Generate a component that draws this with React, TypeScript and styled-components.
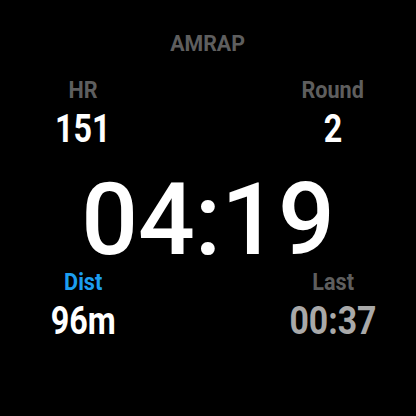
import styled, { createGlobalStyle } from 'styled-components'

const GlobalStyle = createGlobalStyle`
  html, body {
    margin: 0;
    padding: 0;
    background: #000;
  }
`

const Screen = styled.div`
  width: 416px;
  height: 416px;
  background: #000;
  display: flex;
  flex-direction: column;
  align-items: center;
  padding-top: 33px;
  box-sizing: border-box;
  font-family: Roboto, 'Liberation Sans', sans-serif;
  font-weight: 700;
`

const Title = styled.div`
  font-size: 22px;
  line-height: 22px;
  color: #5e5e5e;
  transform: scaleX(0.97);
`

const StatRow = styled.div<{ gapTop: number }>`
  width: 100%;
  display: flex;
  justify-content: space-between;
  margin-top: ${({ gapTop }) => gapTop}px;
`

const Stat = styled.div`
  width: 166px;
  display: flex;
  flex-direction: column;
  align-items: center;
`

const Label = styled.div<{ accent?: boolean }>`
  font-size: 24px;
  line-height: 24px;
  color: ${({ accent }) => (accent ? '#1c9ef0' : '#5e5e5e')};
  transform: scaleX(0.9);
`

const Value = styled.div<{ dim?: boolean }>`
  font-size: 38px;
  line-height: 38px;
  margin-top: 8px;
  color: ${({ dim }) => (dim ? '#a9a9a9' : '#ffffff')};
  transform: scaleX(${({ dim }) => (dim ? 0.89 : 0.85)});
`

// big digits sit tight against the stats below, as on the watch face
const Timer = styled.div`
  font-size: 100px;
  line-height: 80px;
  font-weight: 500;
  color: #fff;
  margin-top: 32px;
`

interface StatProps {
  label: string
  value: string
  accent?: boolean
  dim?: boolean
}

const StatBlock = ({ label, value, accent, dim }: StatProps) => (
  <Stat>
    <Label accent={accent}>{label}</Label>
    <Value dim={dim}>{value}</Value>
  </Stat>
)

export default function App() {
  return (
    <>
      <GlobalStyle />
      <Screen>
        <Title>AMRAP</Title>
        <StatRow gapTop={23}>
          <StatBlock label='HR' value='151' />
          <StatBlock label='Round' value='2' />
        </StatRow>
        <Timer>04:19</Timer>
        <StatRow gapTop={10}>
          <StatBlock label='Dist' value='96m' accent />
          <StatBlock label='Last' value='00:37' dim />
        </StatRow>
      </Screen>
    </>
  )
}
